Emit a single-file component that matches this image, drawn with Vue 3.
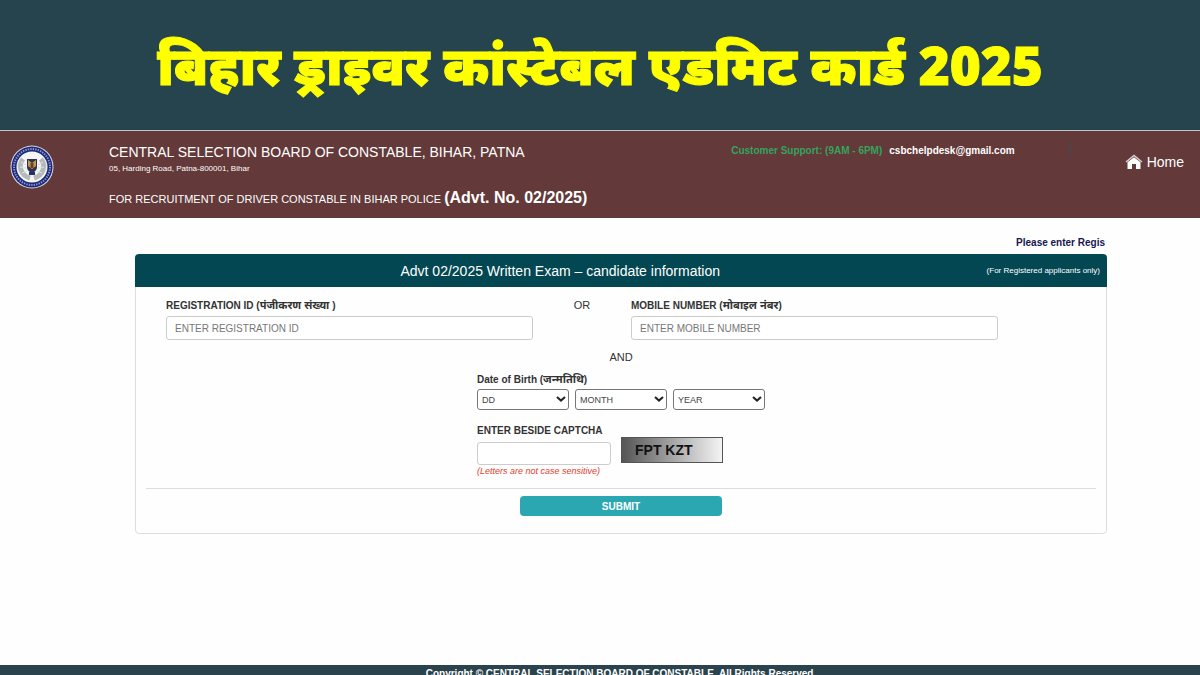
<template>
  <div class="page">
    <div class="banner">
      <h1>बिहार ड्राइवर कांस्टेबल एडमिट कार्ड 2025</h1>
    </div>

    <header class="site-header">
      <svg class="logo" viewBox="0 0 44 44" role="img" aria-label="Board emblem">
        <circle cx="22" cy="22" r="21.5" fill="#d9dcea" />
        <circle cx="22" cy="22" r="20.5" fill="#1c2878" />
        <circle cx="22" cy="22" r="18" fill="none" stroke="#8f98cc" stroke-width="2" stroke-dasharray="1.4 1.1" />
        <circle cx="22" cy="22" r="15.5" fill="#f3f4f3" />
        <path d="M13 14 C8 20 10 30 20 33 M31 14 C36 20 34 30 24 33" fill="none" stroke="#b4baba" stroke-width="5" />
        <path d="M11 17 l5 3 M10 22 l6 1 M12 28 l5 -2 M33 17 l-5 3 M34 22 l-6 1 M32 28 l-5 -2" stroke="#dfe2e2" stroke-width="1" />
        <path d="M17 14 h10 v8 q0 4 -5 6 q-5 -2 -5 -6z" fill="#30334e" />
        <path d="M18 15 l4 3 l4 -3 v6 l-4 3 l-4 -3z" fill="#c29a4a" />
        <path d="M20.5 18 h3 v5 h-3z" fill="#6d3f2c" />
        <path d="M19 27 h6 v3 h-6z" fill="#25306f" />
      </svg>
      <div class="board">
        <div class="board-name">CENTRAL SELECTION BOARD OF CONSTABLE, BIHAR, PATNA</div>
        <div class="board-address">05, Harding Road, Patna-800001, Bihar</div>
        <div class="board-advt">
          FOR RECRUITMENT OF DRIVER CONSTABLE IN BIHAR POLICE <b>(Advt. No. 02/2025)</b>
        </div>
      </div>
      <div class="support">
        <span class="support-label">Customer Support: (9AM - 6PM)</span>
        <span>csbchelpdesk@gmail.com</span>
      </div>
      <div class="divider"></div>
      <a class="home" href="#">
        <svg viewBox="0 0 18 16" aria-hidden="true">
          <path d="M1 8 L9 1.5 L17 8" fill="none" stroke="#d8cccc" stroke-width="1.6" />
          <path d="M2.5 8.3 L9 3.2 L15.5 8.3 V15 H11 V10 H7 V15 H2.5z" fill="#fff" />
        </svg>
        Home
      </a>
    </header>

    <main>
      <div class="ticker">Please enter Regis</div>

      <form class="card" @submit.prevent>
        <div class="card-header">
          <h2>Advt 02/2025 Written Exam – candidate information</h2>
          <small>(For Registered applicants only)</small>
        </div>

        <div class="card-body">
          <div class="id-row">
            <div class="field">
              <label for="registration">REGISTRATION ID (<span lang="hi">पंजीकरण संख्या</span> )</label>
              <input id="registration" v-model="registration" type="text" placeholder="ENTER REGISTRATION ID" />
            </div>
            <div class="or">OR</div>
            <div class="field">
              <label for="mobile">MOBILE NUMBER (<span lang="hi">मोबाइल नंबर</span>)</label>
              <input id="mobile" v-model="mobile" type="text" placeholder="ENTER MOBILE NUMBER" />
            </div>
          </div>

          <div class="and">AND</div>

          <div class="details">
            <label for="dob-0">Date of Birth (<span lang="hi">जन्मतिथि</span>)</label>
            <div class="dob">
              <div v-for="(part, i) in dobParts" :key="part" class="select-wrap">
                <select :id="'dob-' + i" :aria-label="part">
                  <option>{{ part }}</option>
                </select>
                <svg viewBox="0 0 10 6" aria-hidden="true">
                  <path d="M1 1 L5 4.6 L9 1" fill="none" stroke="#222" stroke-width="2" />
                </svg>
              </div>
            </div>

            <label class="captcha-label" for="captcha">ENTER BESIDE CAPTCHA</label>
            <div class="captcha-row">
              <input id="captcha" v-model="captcha" type="text" />
              <div class="captcha-image">FPT KZT</div>
            </div>
            <div class="hint">(Letters are not case sensitive)</div>
          </div>

          <div class="actions">
            <button type="submit">SUBMIT</button>
          </div>
        </div>
      </form>
    </main>

    <footer>Copyright © CENTRAL SELECTION BOARD OF CONSTABLE. All Rights Reserved.</footer>
  </div>
</template>

<script setup>
import { ref } from 'vue'

const registration = ref('')
const mobile = ref('')
const captcha = ref('')

const dobParts = ['DD', 'MONTH', 'YEAR']
</script>

<style>
body {
  margin: 0;
  background: #fff;
}
</style>

<style scoped>
.page {
  display: flex;
  flex-direction: column;
  height: 100vh;
  overflow: hidden;
  background: #fefefe;
  color: #333;
  font-family: "Liberation Sans", "Noto Sans", sans-serif;
  font-size: 11px;
}

.page * {
  box-sizing: border-box;
}

.banner {
  display: flex;
  flex: none;
  align-items: center;
  justify-content: center;
  height: 130px;
  background: #25444d;
}

h1 {
  margin: 0;
  color: #ff0;
  font-family: "Noto Sans", sans-serif;
  font-size: 53px;
  font-weight: 900;
  line-height: 80px;
  white-space: nowrap;
  -webkit-text-stroke: 1px #ff0;
}

.site-header {
  display: flex;
  flex: none;
  height: 88px;
  padding: 0 16px 0 10px;
  border-top: 1px solid #c4c4c4;
  background: #633939;
  color: #fff;
  white-space: nowrap;
}

.logo {
  flex: none;
  width: 44px;
  height: 44px;
  margin: 14px 55px 0 0;
}

.board {
  flex: 1;
  padding-top: 12px;
}

.board-name {
  font-size: 14px;
  line-height: 18px;
}

.board-address {
  font-size: 8px;
  line-height: 16px;
}

.board-advt {
  margin-top: 10px;
  font-size: 11px;
  line-height: 22px;
}

.board-advt b {
  font-size: 16px;
}

.support {
  display: flex;
  gap: 7px;
  padding-top: 12px;
  font-size: 10px;
  font-weight: bold;
  line-height: 16px;
}

.support-label {
  color: #35a35f;
}

.divider {
  width: 2px;
  height: 16px;
  margin: 10px 54px 0;
  background: #49454b;
}

.home {
  display: flex;
  align-items: center;
  gap: 4px;
  height: 20px;
  margin-top: 21px;
  color: #fff;
  font-size: 14px;
  text-decoration: none;
}

.home svg {
  width: 18px;
  height: 16px;
}

main {
  flex: 1;
  min-height: 0;
  padding: 18px 93px 0 135px;
}

.ticker {
  padding-right: 2px;
  color: #16164f;
  font-size: 10px;
  font-weight: bold;
  line-height: 14px;
  text-align: right;
}

.card {
  margin-top: 4px;
  border: 1px solid #ddd;
  border-radius: 4px;
}

.card-header {
  display: grid;
  grid-template-columns: 269fr auto 385fr;
  align-items: center;
  height: 33px;
  margin: -1px -1px 0;
  padding-right: 7px;
  border-radius: 4px 4px 0 0;
  background: #034753;
  color: #fff;
}

h2 {
  grid-column: 2;
  margin: 0;
  font-size: 14px;
  font-weight: normal;
}

.card-header small {
  font-size: 8px;
  text-align: right;
}

.card-body {
  padding: 10px 10px 17px;
}

.id-row {
  display: grid;
  grid-template-columns: 367fr 98fr 367fr;
  padding: 0 98px 0 20px;
}

.or {
  line-height: 16px;
  text-align: center;
}

label {
  display: block;
  height: 16px;
  font-size: 10px;
  font-weight: bold;
  line-height: 16px;
  white-space: nowrap;
}

label span {
  font-size: 11px;
}

input {
  display: block;
  width: 100%;
  height: 24px;
  padding: 0 8px;
  border: 1px solid #ccc;
  border-radius: 3px;
  background: #fff;
  color: #555;
  font-family: inherit;
  font-size: 10px;
}

.field input {
  margin-top: 3px;
}

input::placeholder {
  color: #777;
  opacity: 1;
}

.and {
  margin-top: 9px;
  line-height: 16px;
  text-align: center;
}

.details {
  width: 288px;
  margin: 6px auto 0;
}

.dob {
  display: flex;
  gap: 6px;
  margin-top: 2px;
}

.select-wrap {
  position: relative;
  flex: 1;
}

.select-wrap svg {
  position: absolute;
  top: 7px;
  right: 3px;
  width: 10px;
  height: 6px;
  pointer-events: none;
}

select {
  display: block;
  width: 100%;
  height: 21px;
  padding: 0 4px;
  border: 1px solid #777;
  border-radius: 3px;
  background: #fff;
  color: #444;
  font-family: inherit;
  font-size: 9px;
  appearance: none;
}

.captcha-label {
  margin-top: 13px;
}

.captcha-row {
  display: flex;
  align-items: flex-start;
  gap: 10px;
  height: 28px;
  margin-top: -2px;
}

.captcha-row input {
  width: 134px;
  height: 23px;
  margin-top: 5px;
}

.captcha-image {
  width: 102px;
  height: 26px;
  padding-left: 13px;
  border: 1px solid #555;
  background: linear-gradient(90deg, #555, #f4f4f4);
  color: #111;
  font-size: 14px;
  font-weight: bold;
  line-height: 24px;
}

.hint {
  color: #e0402c;
  font-size: 9px;
  font-style: italic;
  line-height: 12px;
}

.actions {
  margin-top: 11px;
  padding-top: 7px;
  border-top: 1px solid #ddd;
  text-align: center;
}

button {
  width: 202px;
  height: 20px;
  padding: 0;
  border: none;
  border-radius: 4px;
  background: #2ba7b1;
  color: #fff;
  font-family: inherit;
  font-size: 10px;
  font-weight: bold;
  cursor: pointer;
}

footer {
  flex: none;
  height: 10px;
  padding: 1px 0 0 42px;
  background: #2a434c;
  color: #fff;
  font-size: 10px;
  font-weight: bold;
  line-height: 16px;
  text-align: center;
}
</style>
